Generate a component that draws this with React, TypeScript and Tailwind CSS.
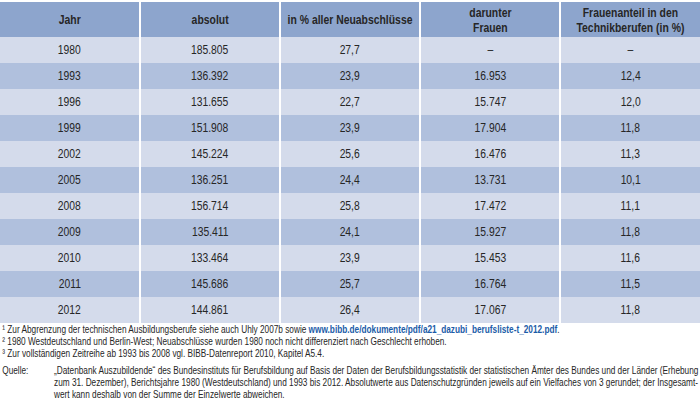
import React from "react";

const rows: [string, string, string, string, string][] = [
  ["1980", "185.805", "27,7", "–", "–"],
  ["1993", "136.392", "23,9", "16.953", "12,4"],
  ["1996", "131.655", "22,7", "15.747", "12,0"],
  ["1999", "151.908", "23,9", "17.904", "11,8"],
  ["2002", "145.224", "25,6", "16.476", "11,3"],
  ["2005", "136.251", "24,4", "13.731", "10,1"],
  ["2008", "156.714", "25,8", "17.472", "11,1"],
  ["2009", "135.411", "24,1", "15.927", "11,8"],
  ["2010", "133.464", "23,9", "15.453", "11,6"],
  ["2011", "145.686", "25,7", "16.764", "11,5"],
  ["2012", "144.861", "26,4", "17.067", "11,8"],
];

const font = { fontFamily: '"Liberation Sans", Arial, sans-serif' };

const headers: React.ReactNode[] = [
  "Jahr",
  "absolut",
  "in % aller Neuabschlüsse",
  <>darunter<br />Frauen</>,
  <>Frauenanteil in den<br />Technikberufen (in %)</>,
];

export default function App() {
  return (
    <div className="w-[700px] h-[415px] bg-white text-[#262626] pt-[2px] overflow-hidden" style={font}>
      <div className="grid grid-cols-[139px_138px_138px_138px_139px] gap-x-[2px] h-[35px]">
        {headers.map((h, i) => (
          <div key={i} className="bg-[#8da5cd] flex items-center justify-center text-center font-bold text-[13px] leading-[15px] whitespace-nowrap">
            <span className="inline-block scale-x-[0.8] origin-center">{h}</span>
          </div>
        ))}
      </div>
      {rows.map((r, ri) => (
        <div key={ri} className="grid grid-cols-[139px_138px_138px_138px_139px] gap-x-[2px] h-[26px]">
          {r.map((c, ci) => (
            <div key={ci} className={`${ri % 2 === 0 ? "bg-[#d4dbeb]" : "bg-[#b0c0dd]"} flex items-center justify-center text-[12px]`}>
              <span className="inline-block scale-x-[0.86] origin-center">{c}</span>
            </div>
          ))}
        </div>
      ))}
      <div className="w-[700px] overflow-hidden">
        <div className="w-[934px] origin-left scale-x-[0.75] text-[11px] leading-[12px] pl-[3px] whitespace-nowrap">
          <div>¹ Zur Abgrenzung der technischen Ausbildungsberufe siehe auch Uhly 2007b sowie <span className="text-[#1b5ca8] font-bold">www.bibb.de/dokumente/pdf/a21_dazubi_berufsliste-t_2012.pdf</span>.</div>
          <div>² 1980 Westdeutschland und Berlin-West; Neuabschlüsse wurden 1980 noch nicht differenziert nach Geschlecht erhoben.</div>
          <div>³ Zur vollständigen Zeitreihe ab 1993 bis 2008 vgl. BIBB-Datenreport 2010, Kapitel A5.4.</div>
          <div className="flex mt-[5px]">
            <div className="w-[69px] shrink-0">Quelle:</div>
            <div>
              <div>„Datenbank Auszubildende“ des Bundesinstituts für Berufsbildung auf Basis der Daten der Berufsbildungsstatistik der statistischen Ämter des Bundes und der Länder (Erhebung</div>
              <div>zum 31. Dezember), Berichtsjahre 1980 (Westdeutschland) und 1993 bis 2012. Absolutwerte aus Datenschutzgründen jeweils auf ein Vielfaches von 3 gerundet; der Insgesamt-</div>
              <div>wert kann deshalb von der Summe der Einzelwerte abweichen.</div>
            </div>
          </div>
        </div>
      </div>
    </div>
  );
}
